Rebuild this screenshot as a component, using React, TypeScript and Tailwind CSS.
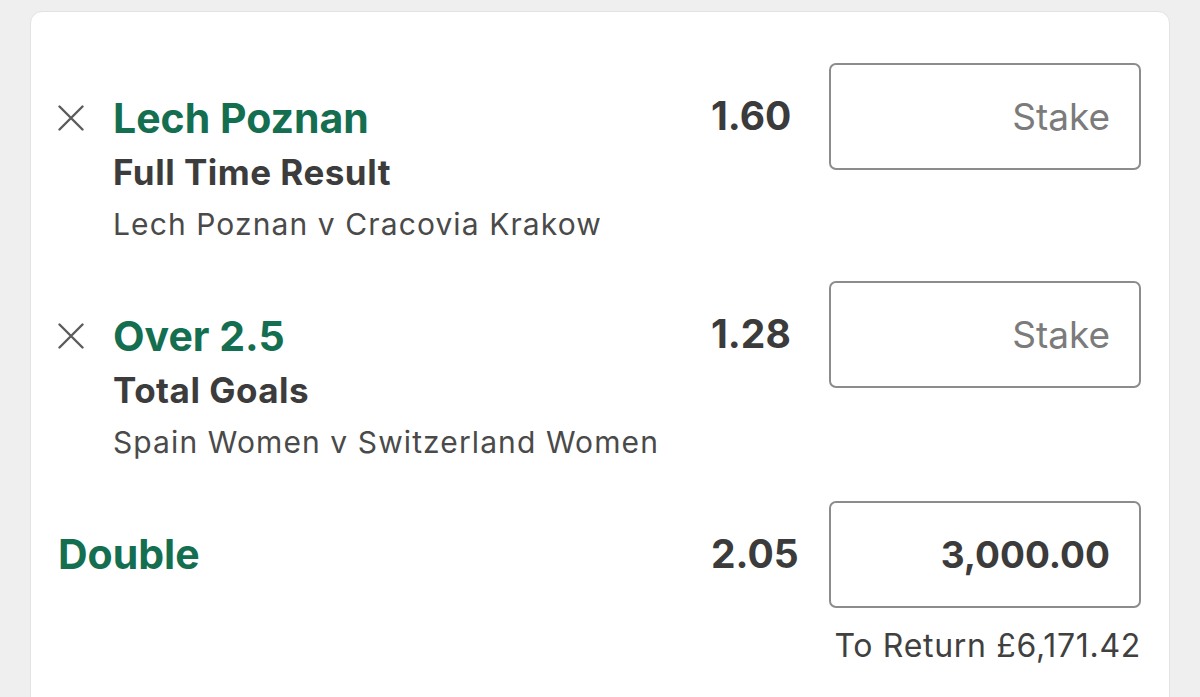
type Bet = {
    selection: string;
    market: string;
    event: string;
    odds: string;
};

const bets: Bet[] = [
    { selection: "Lech Poznan", market: "Full Time Result", event: "Lech Poznan v Cracovia Krakow", odds: "1.60" },
    { selection: "Over 2.5", market: "Total Goals", event: "Spain Women v Switzerland Women", odds: "1.28" },
];

const CloseIcon = () => (
    <svg width="26" height="26" viewBox="0 0 26 26" className="shrink-0">
        <path d="M1.5 1.5 L24.5 24.5 M24.5 1.5 L1.5 24.5" stroke="#5b5b5b" strokeWidth="2.4" strokeLinecap="round" />
    </svg>
);

const StakeBox = ({ value }: { value?: string }) => (
    <input
        readOnly
        value={value ?? ""}
        placeholder="Stake"
        className="w-[312px] h-[107px] shrink-0 rounded-[7px] border-2 border-[#8c8c8c] bg-white pr-[29px] text-right text-[37px] font-bold text-[#3b3b3b] outline-none placeholder:font-normal placeholder:text-[#7b7b7b]"
    />
);

const BetRow = ({ bet }: { bet: Bet }) => (
    <div className="flex items-start">
        <div className="flex-1 pt-[33px]">
            <div className="flex items-center h-[44px]">
                <div className="w-[55px]">
                    <CloseIcon />
                </div>
                <span className="text-[41px] leading-[44px] font-bold text-[#146e50]">{bet.selection}</span>
            </div>
            <div className="pl-[55px] mt-[12px] text-[35px] leading-[40px] font-bold tracking-[0.5px] text-[#3c3c3c]">{bet.market}</div>
            <div className="pl-[55px] mt-[15px] text-[30px] leading-[34px] tracking-[1.1px] text-[#4a4a4a]">{bet.event}</div>
        </div>
        <div className="flex items-center">
            <div className="w-[118px] text-[39px] font-bold text-[#3b3b3b]">{bet.odds}</div>
            <StakeBox />
        </div>
    </div>
);

export default function App() {
    return (
        <div className="h-[697px] overflow-hidden bg-[#efefef] px-[30px] pt-[11px] font-['Inter','Liberation_Sans',sans-serif]">
            <div className="h-[760px] rounded-[12px] border border-[#e2e2e2] bg-white pl-[27px] pr-[28px] pt-[51px]">
                <div className="flex flex-col gap-[40px]">
                    {bets.map((bet) => (
                        <BetRow key={bet.selection} bet={bet} />
                    ))}
                    <div className="mt-[2px]">
                        <div className="flex items-center">
                            <div className="flex-1 text-[41px] font-bold text-[#146e50]">Double</div>
                            <div className="w-[118px] text-[39px] font-bold text-[#3b3b3b]">2.05</div>
                            <StakeBox value="3,000.00" />
                        </div>
                        <div className="mt-[20px] text-right text-[32px] leading-[36px] tracking-[0.7px] text-[#404040]">To Return £6,171.42</div>
                    </div>
                </div>
            </div>
        </div>
    );
}
